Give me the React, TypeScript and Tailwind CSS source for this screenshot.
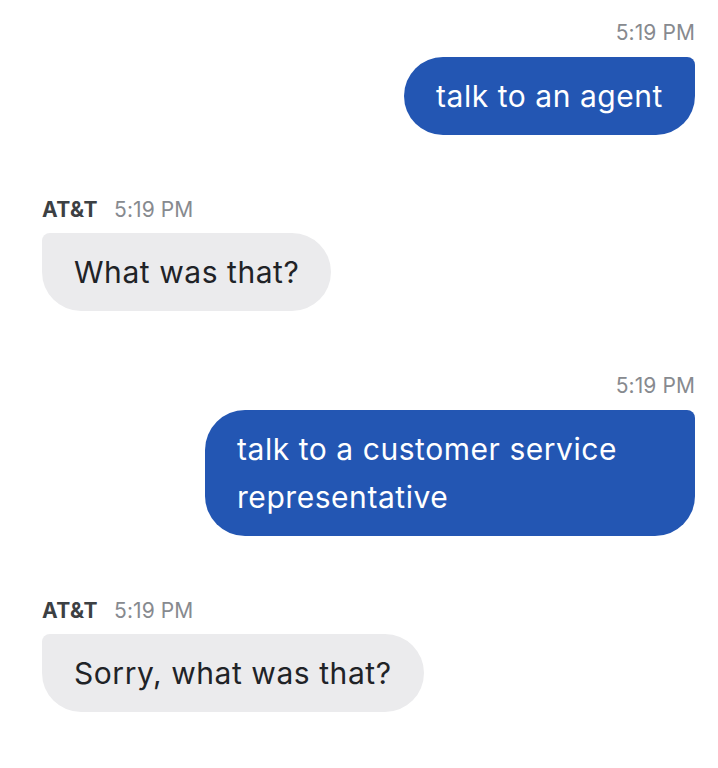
import React from "react";

const font = { fontFamily: 'Inter, "Open Sans", sans-serif' };

function UserMsg({ time, text }: { time: string; text: string }) {
  return (
    <div className="flex flex-col items-end">
      <div className="h-6 leading-6 text-[21px] tracking-[0.1px] text-[#878a8f]">{time}</div>
      <div className="mt-3 max-w-[490px] rounded-[40px] rounded-tr-[8px] bg-[#2356b3] px-8 py-[15px] text-[30px] leading-[48px] tracking-[0.55px] text-white">
        {text}
      </div>
    </div>
  );
}

function AgentMsg({ time, text }: { time: string; text: string }) {
  return (
    <div className="flex flex-col items-start">
      <div className="flex h-6 items-center gap-[16px] leading-6 text-[21px]">
        <span className="font-bold tracking-[0.5px] text-[#3c4043]">AT&amp;T</span>
        <span className="tracking-[0.1px] text-[#878a8f]">{time}</span>
      </div>
      <div className="mt-[11px] rounded-[40px] rounded-tl-[8px] bg-[#ebebed] px-8 py-[15px] text-[30px] leading-[48px] tracking-[0.55px] text-[#1f2327]">
        {text}
      </div>
    </div>
  );
}

export default function App() {
  return (
    <div className="min-h-[768px] bg-white pt-[21px] pl-[42px] pr-[23px]" style={font}>
      <div className="flex flex-col gap-[63px]">
        <UserMsg time="5:19 PM" text="talk to an agent" />
        <AgentMsg time="5:19 PM" text="What was that?" />
        <UserMsg time="5:19 PM" text="talk to a customer service representative" />
        <AgentMsg time="5:19 PM" text="Sorry, what was that?" />
      </div>
    </div>
  );
}
